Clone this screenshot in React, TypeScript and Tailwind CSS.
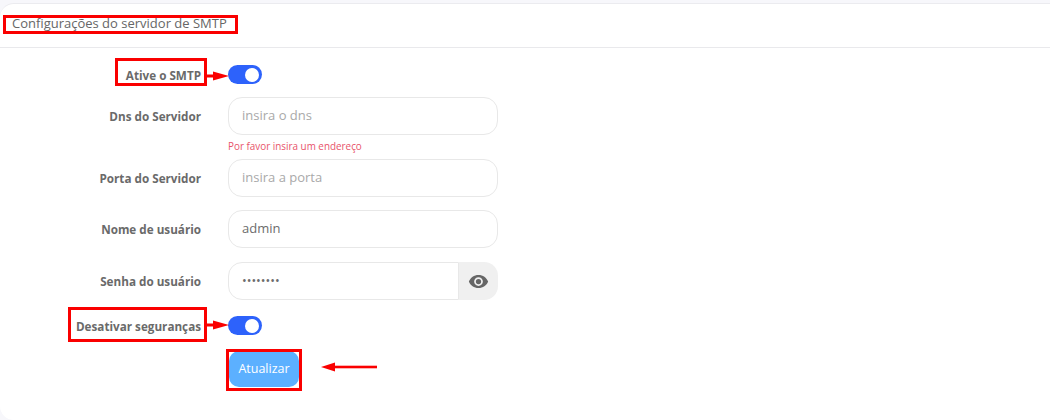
const font = "font-['Open_Sans',sans-serif]";

function Toggle() {
  return (
    <div className="flex h-[19px] w-[34px] items-center justify-end rounded-full bg-[#2d62fb] pr-[3px]">
      <div className="h-[14px] w-[14px] rounded-full bg-white" />
    </div>
  );
}

function Label({ children }: { children: string }) {
  return (
    <div className="w-[201px] shrink-0 text-right text-[11.7px] leading-[18px] font-bold text-[#6a6a6a]">
      {children}
    </div>
  );
}

function Field({ label, placeholder, value }: { label: string; placeholder?: string; value?: string }) {
  return (
    <div className="flex items-center gap-[27px]">
      <Label>{label}</Label>
      <div className="flex h-[38px] w-[270px] items-center rounded-[14px] border border-[#e8e8e8] bg-white pl-[13px] text-[13px]">
        {value ? <span className="text-[#6c6c6c]">{value}</span> : <span className="text-[#a9a9a9]">{placeholder}</span>}
      </div>
    </div>
  );
}

function ArrowRight({ className }: { className: string }) {
  return (
    <svg className={`absolute ${className}`} width="23" height="10" viewBox="0 0 23 10">
      <rect x="0" y="3.500" width="10" height="3" fill="#fa0000" />
      <path d="M23 5 L7 0.500 L7 9.500 Z" fill="#fa0000" />
    </svg>
  );
}

function ArrowLeft({ className }: { className: string }) {
  return (
    <svg className={`absolute ${className}`} width="56" height="10" viewBox="0 0 56 10">
      <rect x="10" y="3.700" width="46" height="2.600" fill="#fa0000" />
      <path d="M0 5 L14 0.500 L14 9.500 Z" fill="#fa0000" />
    </svg>
  );
}

export default function App() {
  return (
    <div className={`relative h-[420px] w-[1050px] overflow-hidden bg-[#f7f7fb] pt-[3px] ${font}`}>
      <div className="h-[417px] rounded-l-[14px] border-t border-[#ebebef] bg-white">
        <div className="flex h-[44px] items-center border-b border-[#e9e9ec] pb-[3px] pl-[12px] text-[13px] font-medium text-[#666666]">
          Configurações do servidor de SMTP
        </div>
        <div className="flex flex-col pt-[17px]">
          <div className="flex items-center gap-[27px]">
            <Label>Ative o SMTP</Label>
            <Toggle />
          </div>
          <div className="mt-[13px]">
            <Field label="Dns do Servidor" placeholder="insira o dns" />
          </div>
          <div className="h-[24px] pl-[228px] pt-[5px] text-[9.9px] leading-[13px] text-[#e8536a]">
            Por favor insira um endereço
          </div>
          <Field label="Porta do Servidor" placeholder="insira a porta" />
          <div className="mt-[13px]">
            <Field label="Nome de usuário" value="admin" />
          </div>
          <div className="mt-[14px] flex items-center gap-[27px]">
            <Label>Senha do usuário</Label>
            <div className="flex h-[38px] w-[270px]">
              <div className="flex w-[231px] items-center rounded-l-[14px] border border-[#e8e8e8] bg-white pl-[13px] text-[12.5px] text-[#6c6c6c]">
                ••••••••
              </div>
              <div className="flex flex-1 items-center justify-center rounded-r-[14px] bg-[#f0f0f0]">
                <svg width="21" height="21" viewBox="0 0 24 24" fill="#666666">
                  <path d="M12 4.500C7 4.500 2.700 7.600 1 12c1.700 4.400 6 7.500 11 7.500s9.300-3.100 11-7.500C21.300 7.600 17 4.500 12 4.500zM12 17a5 5 0 1 1 0-10 5 5 0 0 1 0 10zm0-8a3 3 0 1 0 0 6 3 3 0 0 0 0-6z" />
                </svg>
              </div>
            </div>
          </div>
          <div className="mt-[16px] flex items-center gap-[27px]">
            <Label>Desativar seguranças</Label>
            <Toggle />
          </div>
          <div className="mt-[16px] pl-[229px]">
            <button className={`flex h-[36px] w-[70px] items-center justify-center rounded-[10px] bg-[#5cb0ff] text-[12.5px] font-medium text-white ${font}`}>
              Atualizar
            </button>
          </div>
        </div>
      </div>

      {/* red annotations drawn over the screenshot */}
      <div className="absolute left-[3px] top-[15px] h-[19px] w-[235px] border-[3px] border-[#fa0000]" />
      <div className="absolute left-[115px] top-[58px] h-[28px] w-[92px] border-[3px] border-[#fa0000]" />
      <div className="absolute left-[68px] top-[307px] h-[35px] w-[139px] border-[3px] border-[#fa0000]" />
      <div className="absolute left-[226px] top-[349px] h-[42px] w-[76px] border-[3px] border-[#fa0000]" />
      <ArrowRight className="left-[206px] top-[71px]" />
      <ArrowRight className="left-[206px] top-[320px]" />
      <ArrowLeft className="left-[321px] top-[362px]" />
    </div>
  );
}
